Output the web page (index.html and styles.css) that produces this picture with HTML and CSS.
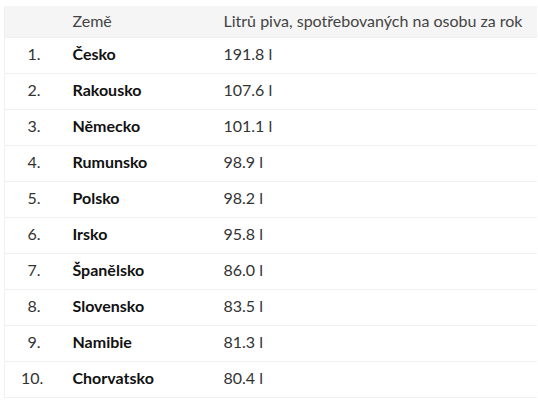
FILE: index.html
```html
<!DOCTYPE html>
<html lang="cs">
<head>
<meta charset="utf-8">
<link rel="stylesheet" href="styles.css">
</head>
<body>
<table class="beer">
  <thead>
    <tr><th class="rank"></th><th class="country">Země</th><th class="value">Litrů piva, spotřebovaných na osobu za rok</th></tr>
  </thead>
  <tbody>
    <tr><td class="rank">1.</td><td class="country">Česko</td><td class="value">191.8 l</td></tr>
    <tr><td class="rank">2.</td><td class="country">Rakousko</td><td class="value">107.6 l</td></tr>
    <tr><td class="rank">3.</td><td class="country">Německo</td><td class="value">101.1 l</td></tr>
    <tr><td class="rank">4.</td><td class="country">Rumunsko</td><td class="value">98.9 l</td></tr>
    <tr><td class="rank">5.</td><td class="country">Polsko</td><td class="value">98.2 l</td></tr>
    <tr><td class="rank">6.</td><td class="country">Irsko</td><td class="value">95.8 l</td></tr>
    <tr><td class="rank">7.</td><td class="country">Španělsko</td><td class="value">86.0 l</td></tr>
    <tr><td class="rank">8.</td><td class="country">Slovensko</td><td class="value">83.5 l</td></tr>
    <tr><td class="rank">9.</td><td class="country">Namibie</td><td class="value">81.3 l</td></tr>
    <tr><td class="rank">10.</td><td class="country">Chorvatsko</td><td class="value">80.4 l</td></tr>
  </tbody>
</table>
</body>
</html>
```
FILE: styles.css
```css
html, body {
  margin: 0;
  padding: 0;
  background: #ffffff;
}
body {
  padding: 6px 1px 0 4px;
  font-family: Lato, "Liberation Sans", sans-serif;
  font-size: 16px;
  line-height: 19px;
  color: #333333;
}
.beer {
  width: 533px;
  border-collapse: collapse;
  border-left: 1px solid #f0f0f0;
  table-layout: fixed;
}
.beer th {
  background: #f5f5f5;
  height: 31px;
  padding: 0 16px 2px;
  box-sizing: border-box;
  font-weight: 400;
  text-align: left;
  color: #444444;
  white-space: nowrap;
  vertical-align: middle;
}
.beer td {
  height: 36px;
  box-sizing: border-box;
  padding: 0 16px 4px;
  border-top: 1px solid #efefef;
  white-space: nowrap;
  vertical-align: middle;
}
.beer tbody tr:last-child td {
  border-bottom: 1px solid #efefef;
}
.beer .rank {
  width: 52px;
  text-align: right;
  color: #333333;
}
.beer .country {
  width: 151px;
}
.beer td.country {
  font-weight: 700;
  color: #111111;
}
.beer td.value {
  color: #333333;
}
```
